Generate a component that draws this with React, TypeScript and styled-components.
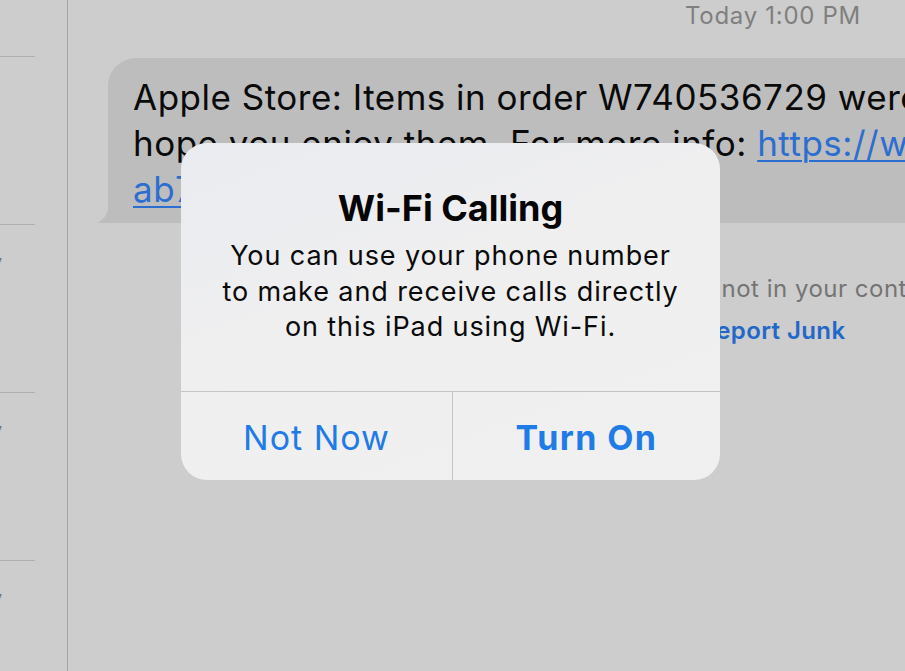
import styled, { createGlobalStyle } from "styled-components";

const GlobalStyle = createGlobalStyle`
  html, body {
    margin: 0;
    padding: 0;
    width: 905px;
    height: 671px;
    overflow: hidden;
    background: #cdcdcd;
    font-family: Inter, "Noto Sans", "Liberation Sans", sans-serif;
    -webkit-font-smoothing: antialiased;
  }
`;

const Screen = styled.div`
  position: relative;
  display: flex;
  width: 905px;
  height: 671px;
  overflow: hidden;
  background: #cdcdcd;
`;

const Sidebar = styled.aside`
  flex: 0 0 67px;
  display: flex;
  flex-direction: column;
  border-right: 1px solid #a5a5a5;
`;

const SidebarRow = styled.div<{ $first?: boolean }>`
  display: flex;
  flex-direction: column;
  justify-content: space-between;
  height: ${(p) => (p.$first ? "57px" : "168px")};
  flex: 0 0 auto;
`;

const RowDate = styled.div`
  width: 3px;
  height: 24px;
  margin-top: 25px;
  overflow: hidden;
  font-size: 20px;
  line-height: 24px;
  color: #767676;
`;

const RowDateText = styled.span`
  display: block;
  margin-left: -9px;
`;

const Separator = styled.div`
  width: 35px;
  height: 1px;
  background: #b0b0b0;
`;

const Conversation = styled.main`
  flex: 0 0 1410px;
  min-width: 0;
  display: flex;
  flex-direction: column;
  align-items: center;
`;

const Timestamp = styled.div`
  margin-top: 3px;
  font-size: 24px;
  line-height: 26px;
  color: #7f7f7f;
  letter-spacing: 0.7px;
`;

const Bubble = styled.div`
  position: relative;
  align-self: flex-start;
  margin: 29px 0 0 40px;
  padding: 16px 26px 11px 25px;
  background: #bdbdbe;
  border-radius: 28px 28px 28px 0;
  font-size: 35px;
  line-height: 46px;
  color: #0a0a0a;
  letter-spacing: 0.5px;
`;

const BubbleLine = styled.div`
  white-space: nowrap;
`;

const Link = styled.span`
  color: #2c6ed0;
  text-decoration: underline;
  text-decoration-thickness: 2px;
  text-underline-offset: 4px;
`;

const Tail = styled.svg`
  position: absolute;
  left: -11px;
  bottom: 0;
  width: 12px;
  height: 24px;
`;

const Notice = styled.div`
  margin-top: 50px;
  display: flex;
  flex-direction: column;
  align-items: center;
  gap: 10px;
`;

const NoticeText = styled.div`
  font-size: 24px;
  line-height: 32px;
  color: #747474;
  letter-spacing: 0.5px;
`;

const NoticeAction = styled.div`
  font-size: 24px;
  line-height: 32px;
  font-weight: 600;
  color: #2168c8;
  letter-spacing: 0.4px;
`;

const Alert = styled.div`
  position: absolute;
  left: 181px;
  top: 143px;
  width: 539px;
  height: 337px;
  display: flex;
  flex-direction: column;
  border-radius: 26px;
  overflow: hidden;
  background: linear-gradient(160deg, #e9ebf0 0%, #efeff0 40%, #f0f0f0 100%);
`;

const AlertBody = styled.div`
  flex: 1;
  display: flex;
  flex-direction: column;
  align-items: center;
  padding-top: 43px;
`;

const AlertTitle = styled.div`
  font-size: 36px;
  line-height: 44px;
  font-weight: 700;
  color: #050505;
`;

const AlertMessage = styled.div`
  margin-top: 8px;
  font-size: 27px;
  line-height: 35.5px;
  color: #0a0a0a;
  text-align: center;
  letter-spacing: 0.9px;
`;

const AlertActions = styled.div`
  flex: 0 0 88px;
  display: grid;
  grid-template-columns: 271px 1fr;
  border-top: 1px solid #c4c4c6;
`;

const AlertButton = styled.button<{ $primary?: boolean }>`
  display: flex;
  align-items: center;
  justify-content: center;
  padding: 2px 0 0;
  border: none;
  border-left: ${(p) => (p.$primary ? "1px solid #c4c4c6" : "none")};
  background: transparent;
  font-family: inherit;
  font-size: 34px;
  font-weight: ${(p) => (p.$primary ? 700 : 400)};
  color: #1f7be6;
  letter-spacing: ${(p) => (p.$primary ? "1.4px" : "1px")};
`;

export default function App() {
  return (
    <>
      <GlobalStyle />
      <Screen>
        <Sidebar>
          <SidebarRow $first>
            <span />
            <Separator />
          </SidebarRow>
          <SidebarRow>
            <span />
            <Separator />
          </SidebarRow>
          {[0, 1, 2].map((i) => (
            <SidebarRow key={i}>
              <RowDate>
                <RowDateText>y</RowDateText>
              </RowDate>
              <Separator />
            </SidebarRow>
          ))}
        </Sidebar>
        <Conversation>
          <Timestamp>Today 1:00 PM</Timestamp>
          <Bubble>
            <BubbleLine>
              Apple Store: Items in order W740536729 were delivered. We
            </BubbleLine>
            <BubbleLine>
              hope you enjoy them. For more info:{" "}
              <Link>https://www.apple.com/xc/us/vieworder/W740536729/</Link>
            </BubbleLine>
            <BubbleLine>
              <Link>ab7c2f</Link>
            </BubbleLine>
            <Tail viewBox="0 0 12 24">
              <path d="M12 0 Q12 19 0 24 L12 24 Z" fill="#bdbdbe" />
            </Tail>
          </Bubble>
          <Notice>
            <NoticeText>The sender is not in your contact list.</NoticeText>
            <NoticeAction>Report Junk</NoticeAction>
          </Notice>
        </Conversation>
        <Alert>
          <AlertBody>
            <AlertTitle>Wi-Fi Calling</AlertTitle>
            <AlertMessage>
              You can use your phone number
              <br />
              to make and receive calls directly
              <br />
              on this iPad using Wi-Fi.
            </AlertMessage>
          </AlertBody>
          <AlertActions>
            <AlertButton>Not Now</AlertButton>
            <AlertButton $primary>Turn On</AlertButton>
          </AlertActions>
        </Alert>
      </Screen>
    </>
  );
}
